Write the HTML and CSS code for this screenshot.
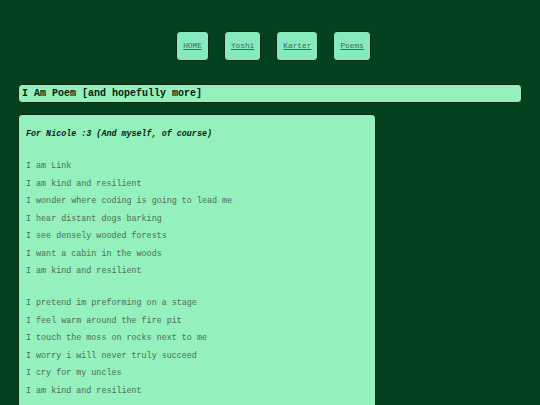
FILE: index.html
```html
<!DOCTYPE html>
<html>
<head>
<meta charset="utf-8">
<link rel="stylesheet" href="styles.css">
</head>
<body>
<nav class="nav">
  <a class="nav-btn" href="#">HOME</a>
  <a class="nav-btn" href="#">Yoshi</a>
  <a class="nav-btn" href="#">Karter</a>
  <a class="nav-btn" href="#">Poems</a>
</nav>
<h1 class="title">I Am Poem [and hopefully more]</h1>
<section class="poem">
  <p class="dedication">For Nicole :3 (And myself, of course)</p>
  <p class="line stanza">I am Link</p>
  <p class="line">I am kind and resilient</p>
  <p class="line">I wonder where coding is going to lead me</p>
  <p class="line">I hear distant dogs barking</p>
  <p class="line">I see densely wooded forests</p>
  <p class="line">I want a cabin in the woods</p>
  <p class="line">I am kind and resilient</p>
  <p class="line stanza">I pretend im preforming on a stage</p>
  <p class="line">I feel warm around the fire pit</p>
  <p class="line">I touch the moss on rocks next to me</p>
  <p class="line">I worry i will never truly succeed</p>
  <p class="line">I cry for my uncles</p>
  <p class="line">I am kind and resilient</p>
</section>
</body>
</html>
```
FILE: styles.css
```css
html, body {
  margin: 0;
  padding: 0;
  background: #04421f;
  font-family: "Liberation Mono", "Courier New", monospace;
  overflow: hidden;
  height: 405px;
}
body {
  padding: 0 18px;
}
.nav {
  display: flex;
  justify-content: center;
  gap: 15px;
  padding: 31px 0 0 7px;
  height: 30px;
}
.nav-btn {
  display: flex;
  align-items: center;
  padding: 0 6px;
  background: #86eabd;
  border: 1px solid #0c2a16;
  border-radius: 4px;
  color: #3d6e57;
  font-size: 7.8px;
  text-decoration: underline;
}
.title {
  margin: 23px 0 0 0;
  height: 17px;
  line-height: 17px;
  background: #94f0bc;
  border: 1px solid #0c2a16;
  border-radius: 4px;
  padding: 0 3px;
  font-size: 10px;
  font-weight: bold;
  color: #0b1a10;
}
.poem {
  margin-top: 11px;
  width: 341px;
  background: #94f0bc;
  border: 1px solid #0c2a16;
  border-radius: 4px;
  padding: 11px 8px 20px 7px;
}
.poem p {
  margin: 0;
  font-size: 8.4px;
  line-height: 17.5px;
}
.dedication {
  font-weight: bold;
  font-style: italic;
  color: #0b1a10;
}
.line {
  color: #4f6e5a;
}
.stanza {
  margin-top: 14.5px !important;
}
```
